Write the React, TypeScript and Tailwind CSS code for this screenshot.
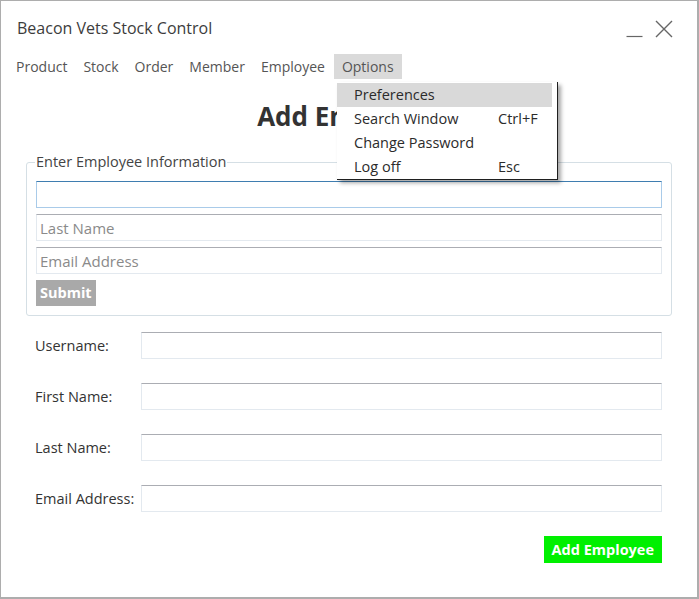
import { useState } from "react";

const menuItems = ["Product", "Stock", "Order", "Member", "Employee"];

const optionItems = [
  { label: "Preferences", shortcut: "" },
  { label: "Search Window", shortcut: "Ctrl+F" },
  { label: "Change Password", shortcut: "" },
  { label: "Log off", shortcut: "Esc" },
];

const formRows = ["Username:", "First Name:", "Last Name:", "Email Address:"];

const TextBox = ({ placeholder, focused }: { placeholder?: string; focused?: boolean }) => {
  return (
    <input
      placeholder={placeholder}
      className={
        focused
          ? "h-[27px] w-full border border-[#a9cbe9] border-t-[#3f7db0] bg-white px-[3px] text-[15px] outline-none"
          : "h-[27px] w-full border border-[#e3e9ef] border-t-[#abadb3] bg-white px-[3px] text-[15px] text-[#333] outline-none placeholder:text-[#8a8a8a]"
      }
    />
  );
};

export default function App() {
  const [hover] = useState(0);
  return (
    <div
      className="relative h-[599px] w-[699px] border-t border-l border-r-2 border-b-2 border-[#adadad] bg-white text-[#333]"
      style={{ fontFamily: '"Open Sans", "Noto Sans", sans-serif' }}
    >
      {/* title bar */}
      <div className="flex h-[53px] items-start justify-between pl-[16px] pr-[24px] pt-[16px]">
        <div className="text-[16px] leading-[22px] text-[#3c3c3c]">Beacon Vets Stock Control</div>
        <div className="flex items-center gap-[12px] pt-[3px]">
          <svg width="17" height="17" viewBox="0 0 17 17">
            <path d="M0.5 15.5 H16.5" stroke="#666" strokeWidth="1.2" />
          </svg>
          <svg width="18" height="18" viewBox="0 0 18 18">
            <path d="M1 1 L17 17 M17 1 L1 17" stroke="#666" strokeWidth="1.4" />
          </svg>
        </div>
      </div>

      {/* menu bar */}
      <div className="flex h-[25px] items-stretch pl-[7px] text-[14px] text-[#555]">
        {menuItems.map((m) => (
          <div key={m} className="flex items-center px-[8px]">
            {m}
          </div>
        ))}
        <div className="ml-[1px] flex items-center bg-[#dadada] px-[8px]">Options</div>
      </div>

      {/* options dropdown */}
      <div className="absolute left-[336px] top-[81px] z-10 w-[221px] border-r border-b border-[#1f1f1f] bg-white pt-[1px] text-[14.5px] text-[#2b2b2b] shadow-[3px_3px_4px_rgba(0,0,0,0.35)]">
        {optionItems.map((o, i) => (
          <div
            key={o.label}
            className={
              i === hover
                ? "mr-[5px] flex h-[24px] items-center bg-[#d9d9d9] pl-[17px]"
                : "mr-[5px] flex h-[24px] items-center pl-[17px]"
            }
          >
            <span className="w-[144px]">{o.label}</span>
            <span>{o.shortcut}</span>
          </div>
        ))}
      </div>

      {/* heading */}
      <h1 className="mt-[19px] text-center text-[26px] font-bold leading-[36px] text-[#333]">Add Employee</h1>

      {/* fieldset */}
      <fieldset className="mx-[25px] mt-[18px] rounded-[3px] border border-[#d5dfe5] px-[9px] pb-[9px] pt-0">
        <legend className="ml-[-1px] px-[1px] text-[14.5px] leading-[20px] text-[#444]">Enter Employee Information</legend>
        <div className="flex flex-col gap-[6px] pt-[9px]">
          <TextBox focused />
          <TextBox placeholder="Last Name" />
          <TextBox placeholder="Email Address" />
        </div>
        <button className="mt-[6px] h-[26px] bg-[#a9a9a9] px-[4px] text-[14.5px] font-bold text-white">Submit</button>
      </fieldset>

      {/* form rows */}
      <div className="mt-[16px] flex flex-col gap-[24px] pl-[34px] pr-[35px]">
        {formRows.map((r) => (
          <div key={r} className="flex items-center">
            <label className="w-[106px] shrink-0 text-[14.5px] text-[#333]">{r}</label>
            <TextBox />
          </div>
        ))}
      </div>

      <div className="mt-[24px] flex justify-end pr-[35px]">
        <button className="h-[27px] bg-[#00f000] px-[8px] text-[14.5px] font-bold text-white">Add Employee</button>
      </div>
    </div>
  );
}
